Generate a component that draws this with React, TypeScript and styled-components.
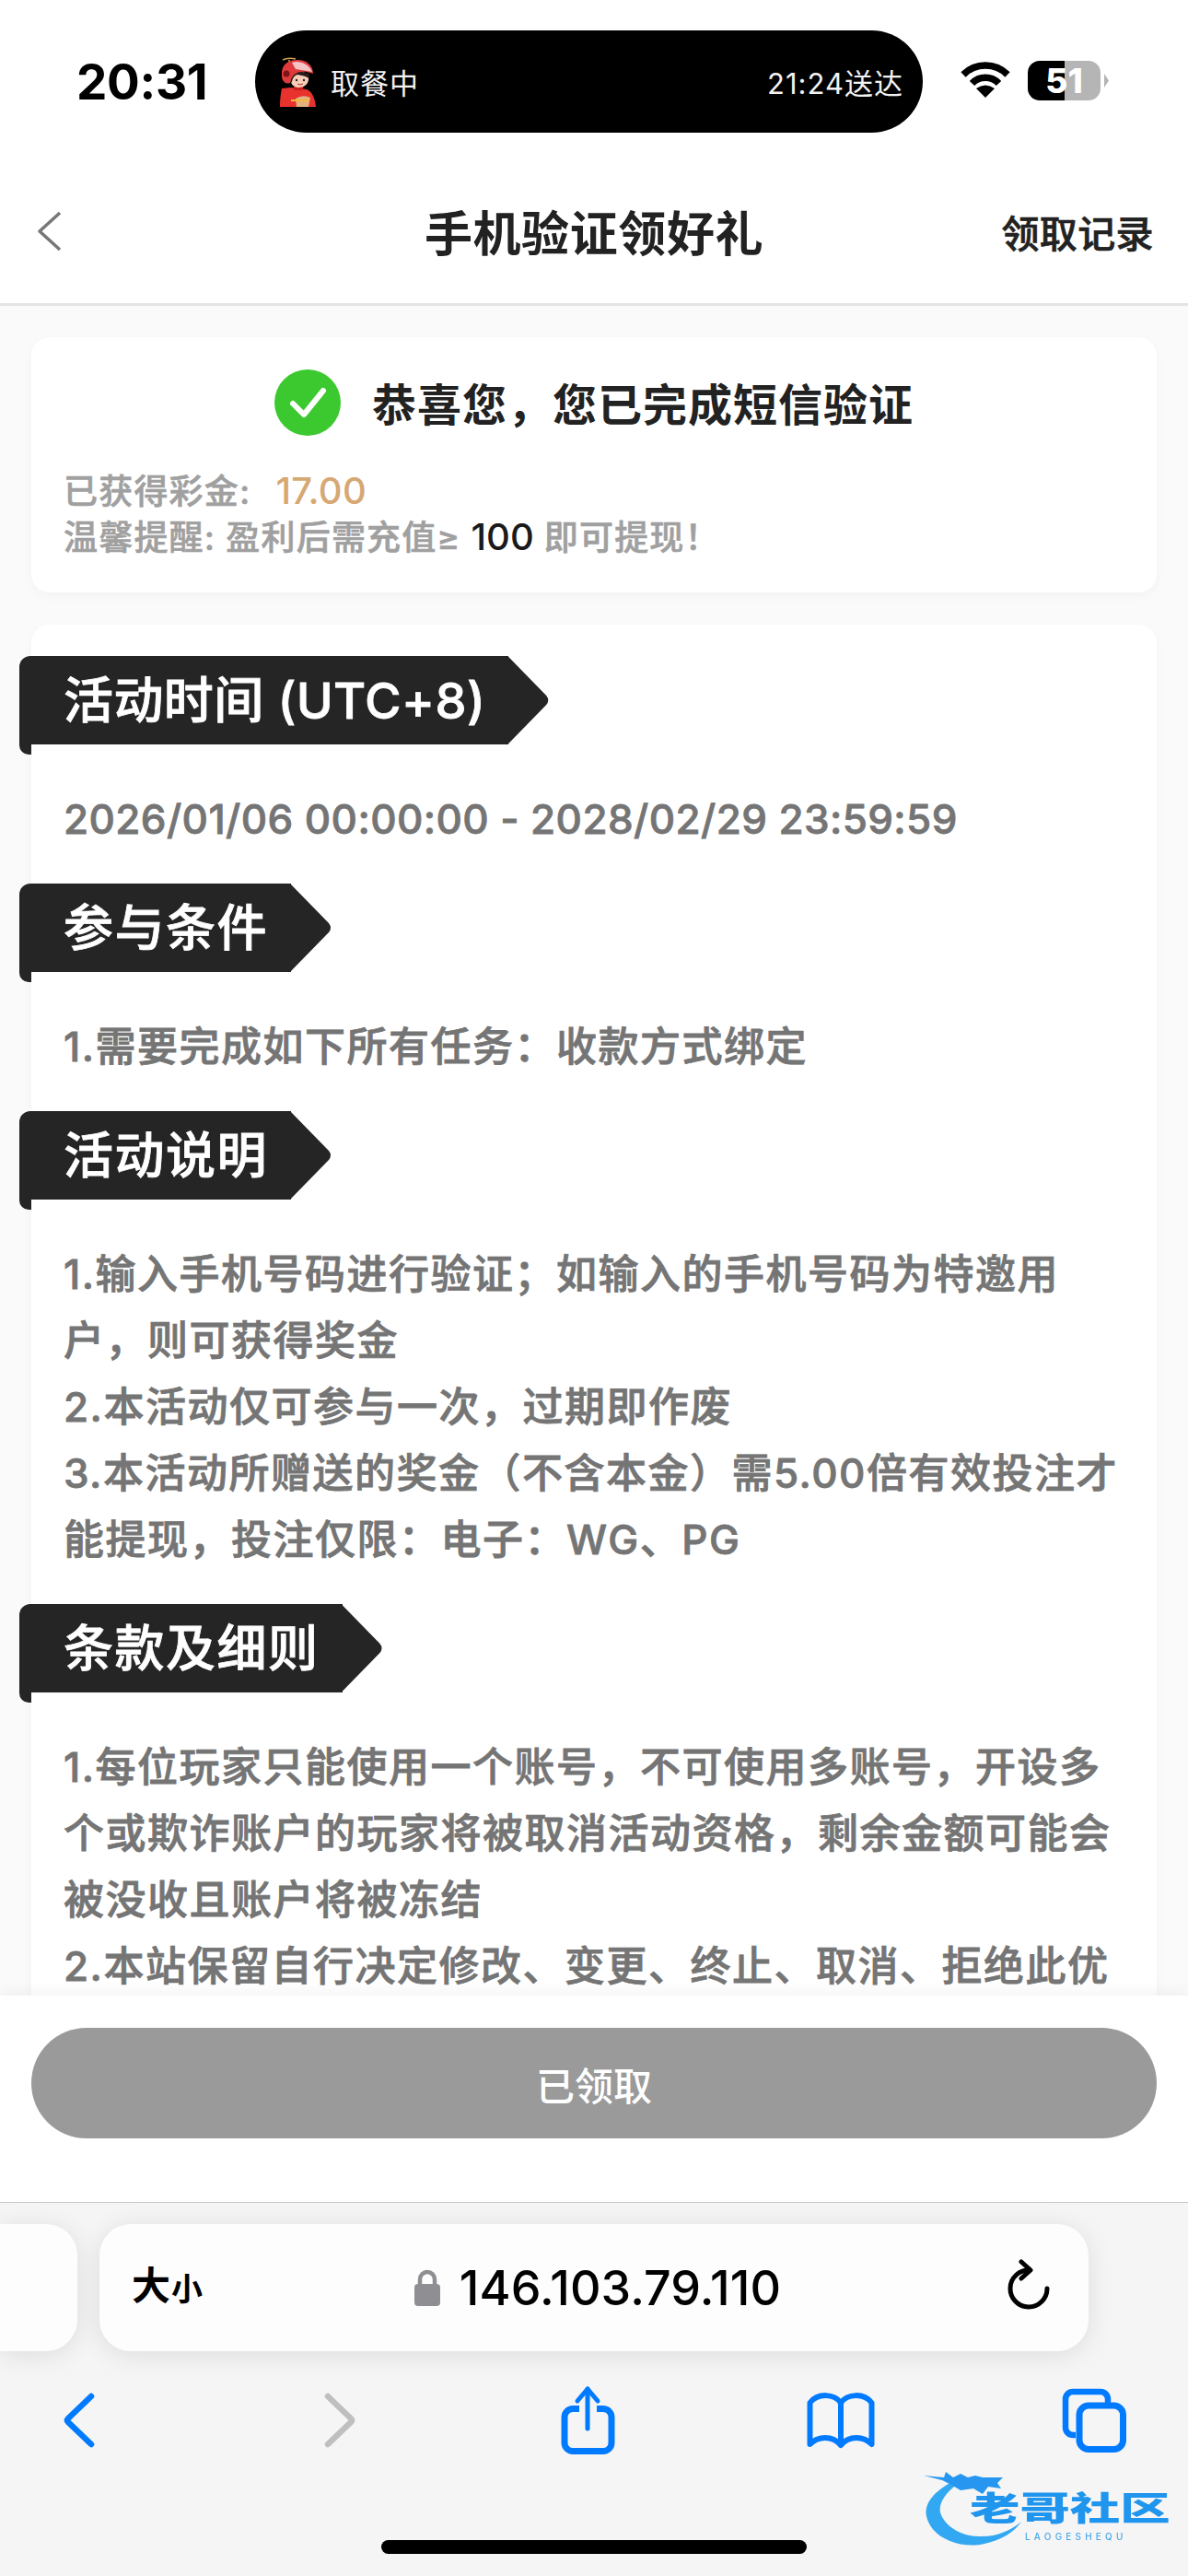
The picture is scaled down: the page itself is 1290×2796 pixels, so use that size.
import React from "react";
import styled, { createGlobalStyle } from "styled-components";

const FONT = `Inter, "Noto Sans CJK SC", sans-serif`;

const GlobalStyle = createGlobalStyle`
  html, body {
    margin: 0;
    padding: 0;
    background: #fff;
    font-family: ${FONT};
  }
  * {
    box-sizing: border-box;
  }
`;

const Screen = styled.div`
  width: 1290px;
  height: 2796px;
  display: flex;
  flex-direction: column;
  overflow: hidden;
  background: #fff;
`;

const StatusBar = styled.div`
  height: 177px;
  flex: none;
  display: flex;
  align-items: center;
  padding-left: 83px;
`;

const Clock = styled.div`
  width: 194px;
  font-size: 53px;
  font-weight: 700;
  color: #000;
  letter-spacing: -0.3px;
`;

const Island = styled.div`
  width: 725px;
  height: 111px;
  border-radius: 56px;
  background: #000;
  display: flex;
  align-items: center;
  padding: 0 21px 0 26px;
  color: #f2f2f2;
  font-size: 31px;
`;

const IslandLabel = styled.span`
  margin-left: 16px;
  flex: 1;
  letter-spacing: 1px;
`;

const IslandEta = styled.span`
  letter-spacing: 1px;
`;

const Battery = styled.div`
  position: relative;
  width: 79px;
  height: 43px;
  margin-left: 19px;
  margin-top: -2px;
  border-radius: 13px;
  background: linear-gradient(90deg, #000 0 40px, #b5b5b5 40px 100%);
  color: #fff;
  font-size: 37px;
  font-weight: 800;
  line-height: 43px;
  text-align: center;

  &::after {
    content: "";
    position: absolute;
    left: 83px;
    top: 14px;
    width: 5px;
    height: 15px;
    background: #b5b5b5;
    clip-path: polygon(0 0, 100% 50%, 0 100%);
  }
`;

const WifiIcon = styled.svg`
  margin-left: 41px;
  margin-top: -4px;
`;

const NavBar = styled.header`
  height: 155px;
  flex: none;
  display: grid;
  grid-template-columns: 1fr auto 1fr;
  align-items: center;
  border-bottom: 3px solid #e4e4e4;
  padding-bottom: 5px;
`;

const NavBack = styled.svg`
  margin-left: 39px;
`;

const NavTitle = styled.h1`
  margin: 0;
  font-size: 52px;
  font-weight: 700;
  color: #222;
  letter-spacing: 0.6px;
`;

const NavAction = styled.a`
  justify-self: end;
  margin-right: 37px;
  font-size: 41px;
  font-weight: 500;
  letter-spacing: 0.4px;
  -webkit-text-stroke: 0.7px #222;
  color: #222;
`;

const Content = styled.main`
  flex: 1;
  min-height: 0;
  overflow: hidden;
  background: #fafafa;
  padding: 34px 34px 0;
  display: flex;
  flex-direction: column;
  gap: 35px;
`;

const Card = styled.section`
  background: #fff;
  border-radius: 20px;
  box-shadow: 0 4px 12px rgba(0, 0, 0, 0.03);
`;

const ResultCard = styled(Card)`
  flex: none;
  padding: 35px;
`;

const ResultHead = styled.div`
  display: flex;
  align-items: center;
  justify-content: center;
  gap: 34px;
  height: 72px;
  margin-bottom: 35px;
`;

const ResultTitle = styled.div`
  font-size: 48px;
  font-weight: 700;
  color: #222;
  letter-spacing: 1px;
  margin-top: -3px;
`;

const ResultLine = styled.div`
  height: 50px;
  font-size: 37px;
  line-height: 50px;
  font-weight: 500;
  color: #a0a0a0;
  -webkit-text-stroke: 0.6px #a0a0a0;
  letter-spacing: 1.2px;
`;

const Amount = styled.span`
  color: #d6a873;
  -webkit-text-stroke: 0;
  margin-left: 27px;
  font-size: 40px;
  letter-spacing: 0.3px;
`;

const Strong = styled.span`
  color: #1a1a1a;
  -webkit-text-stroke: 0;
  font-size: 40px;
  letter-spacing: 0;
`;

const RulesCard = styled(Card)`
  flex: none;
  padding: 34px 35px 0;
`;

const Section = styled.div`
  margin-bottom: 34px;
`;

const Ribbon = styled.h2<{ $latin?: boolean }>`
  position: relative;
  display: inline-flex;
  align-items: center;
  height: 96px;
  margin: 0 0 45px -48px;
  padding: 0 25px 8px 48px;
  vertical-align: top;
  background: #252525;
  border-top-left-radius: 12px;
  color: #fff;
  font-size: 54px;
  font-weight: 500;
  -webkit-text-stroke: 0.8px #fff;
  letter-spacing: ${(p) => (p.$latin ? "0.4px" : "1.5px")};
  white-space: nowrap;

  &::before {
    content: "";
    position: absolute;
    left: 0;
    top: 100%;
    width: 13px;
    height: 11px;
    background: #252525;
    border-bottom-left-radius: 10px;
  }

  &::after {
    content: "";
    position: absolute;
    left: calc(100% - 1px);
    top: 0;
    width: 45px;
    height: 96px;
    background: #252525;
    clip-path: path("M0 0 L42 43 Q46 48 42 53 L0 96 Z");
  }
`;

const RuleLine = styled.div<{ $latin?: boolean }>`
  font-size: 44px;
  line-height: 72px;
  font-weight: 500;
  color: #757575;
  -webkit-text-stroke: 0.8px #757575;
  letter-spacing: ${(p) => (p.$latin ? "0.4px" : "1.5px")};
  white-space: nowrap;
`;

const BottomSheet = styled.div`
  position: relative;
  flex: none;
  height: 224px;
  padding: 35px 34px 0;
  background: #fff;
  box-shadow: 0 -6px 14px rgba(0, 0, 0, 0.04);
`;

const ClaimButton = styled.button`
  display: block;
  width: 100%;
  height: 120px;
  border: 0;
  border-radius: 60px;
  background: #9a9a9a;
  color: #fff;
  font-family: ${FONT};
  font-size: 42px;
  font-weight: 500;
`;

const Browser = styled.div`
  position: relative;
  flex: none;
  height: 406px;
  background: #f5f5f5;
  border-top: 1px solid #c6c6c6;
  padding-top: 23px;
`;

const UrlRow = styled.div`
  display: flex;
  gap: 24px;
  height: 138px;
`;

const SideTab = styled.div`
  width: 84px;
  border-radius: 0 34px 34px 0;
  background: #fdfdfd;
  box-shadow: 0 4px 28px rgba(0, 0, 0, 0.1);
`;

const UrlBar = styled.div`
  position: relative;
  width: 1074px;
  display: flex;
  align-items: center;
  justify-content: center;
  gap: 21px;
  border-radius: 34px;
  background: #fdfdfd;
  box-shadow: 0 4px 28px rgba(0, 0, 0, 0.1);
`;

const SizeLabel = styled.div`
  position: absolute;
  left: 35px;
  top: 46px;
  display: flex;
  align-items: flex-end;
  font-weight: 700;
  color: #000;
  line-height: 1;
`;

const SizeLarge = styled.span`
  font-size: 42px;
`;

const SizeSmall = styled.span`
  font-size: 34px;
  margin-left: 1px;
`;

const UrlText = styled.div`
  font-size: 52px;
  font-weight: 500;
  letter-spacing: 0.1px;
  color: #000;
  margin-right: -8px;
`;

const ReloadIcon = styled.svg`
  position: absolute;
  right: 42px;
  top: 38px;
`;

const Toolbar = styled.nav`
  display: grid;
  grid-template-columns: repeat(5, 275px);
  justify-items: center;
  align-items: center;
  width: 1375px;
  height: 80px;
  margin: 35px 0 0 -50px;
`;

const ForwardIcon = styled.svg`
  margin-left: 12px;
`;

const HomeBar = styled.div`
  width: 462px;
  height: 15px;
  margin: 90px auto 0;
  border-radius: 8px;
  background: #000;
`;

const Watermark = styled.div`
  position: absolute;
  left: 1003px;
  top: 286px;
  width: 270px;
  height: 90px;
  filter: blur(0.7px);
`;

const WatermarkDragon = styled.svg`
  position: absolute;
  left: 0;
  top: 0;
`;

const WatermarkName = styled.div`
  position: absolute;
  left: 50px;
  top: 25px;
  width: 160px;
  font-size: 40px;
  line-height: 46px;
  font-weight: 900;
  white-space: nowrap;
  color: #1f95ee;
  transform: scaleX(1.36) scaleY(0.92);
  transform-origin: left top;
`;

const WatermarkSub = styled.div`
  position: absolute;
  left: 110px;
  top: 71px;
  font-size: 10px;
  line-height: 10px;
  letter-spacing: 4.2px;
  font-weight: 500;
  color: #4aa8ea;
  white-space: nowrap;
`;

const sections = [
  { title: "活动时间 (UTC+8)", latin: true, lines: ["2026/01/06 00:00:00 - 2028/02/29 23:59:59"] },
  { title: "参与条件", lines: ["1.需要完成如下所有任务：收款方式绑定"] },
  {
    title: "活动说明",
    lines: [
      "1.输入手机号码进行验证；如输入的手机号码为特邀用",
      "户，则可获得奖金",
      "2.本活动仅可参与一次，过期即作废",
      "3.本活动所赠送的奖金（不含本金）需5.00倍有效投注才",
      "能提现，投注仅限：电子：WG、PG",
    ],
  },
  {
    title: "条款及细则",
    lines: [
      "1.每位玩家只能使用一个账号，不可使用多账号，开设多",
      "个或欺诈账户的玩家将被取消活动资格，剩余金额可能会",
      "被没收且账户将被冻结",
      "2.本站保留自行决定修改、变更、终止、取消、拒绝此优",
    ],
  },
];

const BLUE = "#007aff";

const Courier = () => (
  <svg width="40" height="54" viewBox="0 0 40 54">
    <path d="M4 3 Q10 0 18 2" stroke="#c9a24a" strokeWidth="1.5" fill="none" />
    <path d="M11 3 L11 5" stroke="#c9a24a" strokeWidth="1.5" />
    <path d="M3 34 C1 44 1 50 1 54 H40 C39 46 37 38 30 35 L13 33 Z" fill="#e8322e" />
    <path d="M16 32 H26 V36 H16 Z" fill="#c9201f" />
    <path d="M18 45 Q26 40 34 44 L32 54 H19 Z" fill="#e3b27e" />
    <path d="M13 46 H32 V48 H13 Z" fill="#f2b93b" />
    <path d="M12 22 C11 12 28 12 32 22 C33 30 26 33 21 33 C16 33 12 29 12 22 Z" fill="#f9cdb8" />
    <path d="M10 22 C8 12 20 14 33 18 L33 24 C30 20 24 20 20 19 C16 20 14 24 14 28 Z" fill="#2a1c1c" />
    <path d="M3 20 C2 8 10 3 20 3 C30 3 37 9 37 18 L30 16 C22 15 14 17 12 28 C7 30 3 26 3 20 Z" fill="#e03a3c" />
    <path d="M14 6 C20 3 32 6 36 16 L18 13 Z" fill="#f3c3c6" />
    <circle cx="8" cy="18" r="3.5" fill="#7d1518" />
    <circle cx="19" cy="25" r="1.2" fill="#222" />
    <circle cx="27" cy="25" r="1.2" fill="#222" />
    <path d="M20 29 Q23 31 26 29" stroke="#a33" strokeWidth="1" fill="none" />
  </svg>
);

const CheckBadge = () => (
  <svg width="72" height="72" viewBox="0 0 72 72">
    <circle cx="36" cy="36" r="36" fill="#3cc92f" />
    <path d="M20 37 L32 49 L53 23" stroke="#fff" strokeWidth="6" fill="none" strokeLinecap="round" strokeLinejoin="round" />
  </svg>
);

const LockIcon = () => (
  <svg width="28" height="40" viewBox="0 0 28 40">
    <path d="M6 18 V11 a8 8 0 0 1 16 0 V18" stroke="#8e8e93" strokeWidth="4.5" fill="none" />
    <rect x="0" y="16" width="28" height="24" rx="4" fill="#8e8e93" />
  </svg>
);

export default function App() {
  return (
    <Screen>
      <GlobalStyle />
      <StatusBar>
        <Clock>20:31</Clock>
        <Island>
          <Courier />
          <IslandLabel>取餐中</IslandLabel>
          <IslandEta>21:24送达</IslandEta>
        </Island>
        <WifiIcon width="54" height="41" viewBox="0 0 54 41">
          <path d="M3 15 A34 34 0 0 1 51 15" stroke="#000" strokeWidth="7.5" fill="none" />
          <path d="M12.5 24.5 A20 20 0 0 1 41.5 24.5" stroke="#000" strokeWidth="7.5" fill="none" />
          <path d="M27 40 L17 30 Q27 23 37 30 Z" fill="#000" />
        </WifiIcon>
        <Battery>51</Battery>
      </StatusBar>

      <NavBar>
        <NavBack width="30" height="46" viewBox="0 0 30 46">
          <path d="M26 3 L4 23 L26 43" stroke="#777" strokeWidth="3.5" fill="none" strokeLinejoin="round" />
        </NavBack>
        <NavTitle>手机验证领好礼</NavTitle>
        <NavAction>领取记录</NavAction>
      </NavBar>

      <Content>
        <ResultCard>
          <ResultHead>
            <CheckBadge />
            <ResultTitle>恭喜您，您已完成短信验证</ResultTitle>
          </ResultHead>
          <ResultLine>
            已获得彩金:<Amount>17.00</Amount>
          </ResultLine>
          <ResultLine>
            温馨提醒: 盈利后需充值≥ <Strong>100</Strong> 即可提现！
          </ResultLine>
        </ResultCard>

        <RulesCard>
          {sections.map((section) => (
            <Section key={section.title}>
              <Ribbon $latin={section.latin}>{section.title}</Ribbon>
              {section.lines.map((line) => (
                <RuleLine key={line} $latin={section.latin}>
                  {line}
                </RuleLine>
              ))}
            </Section>
          ))}
        </RulesCard>
      </Content>

      <BottomSheet>
        <ClaimButton type="button">已领取</ClaimButton>
      </BottomSheet>

      <Browser>
        <UrlRow>
          <SideTab />
          <UrlBar>
            <SizeLabel>
              <SizeLarge>大</SizeLarge>
              <SizeSmall>小</SizeSmall>
            </SizeLabel>
            <LockIcon />
            <UrlText>146.103.79.110</UrlText>
            <ReloadIcon width="46" height="56" viewBox="0 0 46 56">
              <path d="M24 12 A20 20 0 1 0 43 32" stroke="#000" strokeWidth="5" fill="none" strokeLinecap="round" />
              <path d="M15 3 L25 12 L15 21" stroke="#000" strokeWidth="5" fill="none" strokeLinecap="round" strokeLinejoin="round" />
            </ReloadIcon>
          </UrlBar>
        </UrlRow>

        <Toolbar>
          <svg width="38" height="60" viewBox="0 0 38 60">
            <path d="M30 4 L5 28 Q3 30 5 32 L30 56" stroke={BLUE} strokeWidth="6.5" fill="none" strokeLinecap="round" />
          </svg>
          <ForwardIcon width="38" height="60" viewBox="0 0 38 60">
            <path d="M6 4 L31 28 Q33 30 31 32 L6 56" stroke="#bfbfbf" strokeWidth="6.5" fill="none" strokeLinecap="round" />
          </ForwardIcon>
          <svg width="60" height="76" viewBox="0 0 60 76">
            <path d="M21 25.5 H14 a9 9 0 0 0 -9 9 V62.5 a9 9 0 0 0 9 9 H47 a9 9 0 0 0 9 -9 V34.5 a9 9 0 0 0 -9 -9 H40" stroke={BLUE} strokeWidth="7" fill="none" />
            <path d="M30 47 V4" stroke={BLUE} strokeWidth="5" strokeLinecap="round" />
            <path d="M19 17 L30 4 L41 17" stroke={BLUE} strokeWidth="5" fill="none" strokeLinecap="round" strokeLinejoin="round" />
          </svg>
          <svg width="74" height="62" viewBox="0 0 74 62">
            <path d="M37 12 C30 2 12 1 3.5 12 V57 C12 48 28 47 37 58 C46 47 62 48 70.5 57 V12 C62 1 44 2 37 12 Z M37 12 V58" stroke={BLUE} strokeWidth="6" fill="none" strokeLinejoin="round" />
          </svg>
          <svg width="70" height="70" viewBox="0 0 70 70">
            <path d="M15 51 H12 a8 8 0 0 1 -8 -8 V12 a8 8 0 0 1 8 -8 H42 a8 8 0 0 1 8 8 V16" stroke={BLUE} strokeWidth="6.5" fill="none" />
            <rect x="19" y="19" width="47.5" height="47.5" rx="10" stroke={BLUE} strokeWidth="7" fill="none" />
          </svg>
        </Toolbar>

        <HomeBar />

        <Watermark>
          <WatermarkDragon width="110" height="90" viewBox="0 0 110 90">
            <path d="M30 17 C10 28 0 42 3 54 C8 78 40 90 66 84 C84 80 98 72 106 60 C94 70 78 77 60 76 C40 76 22 64 18 50 C16 40 24 28 36 20 Z" fill="#33a8f2" />
            <path d="M0 10 L22 12 L24 6 L32 12 L40 8 L48 12 L56 10 L64 12 L86 12 L80 18 L84 24 L70 22 L64 30 L54 24 L40 26 L30 20 L20 15 Z" fill="#2696f0" />
          </WatermarkDragon>
          <WatermarkName>老哥社区</WatermarkName>
          <WatermarkSub>LAOGESHEQU</WatermarkSub>
        </Watermark>
      </Browser>
    </Screen>
  );
}
